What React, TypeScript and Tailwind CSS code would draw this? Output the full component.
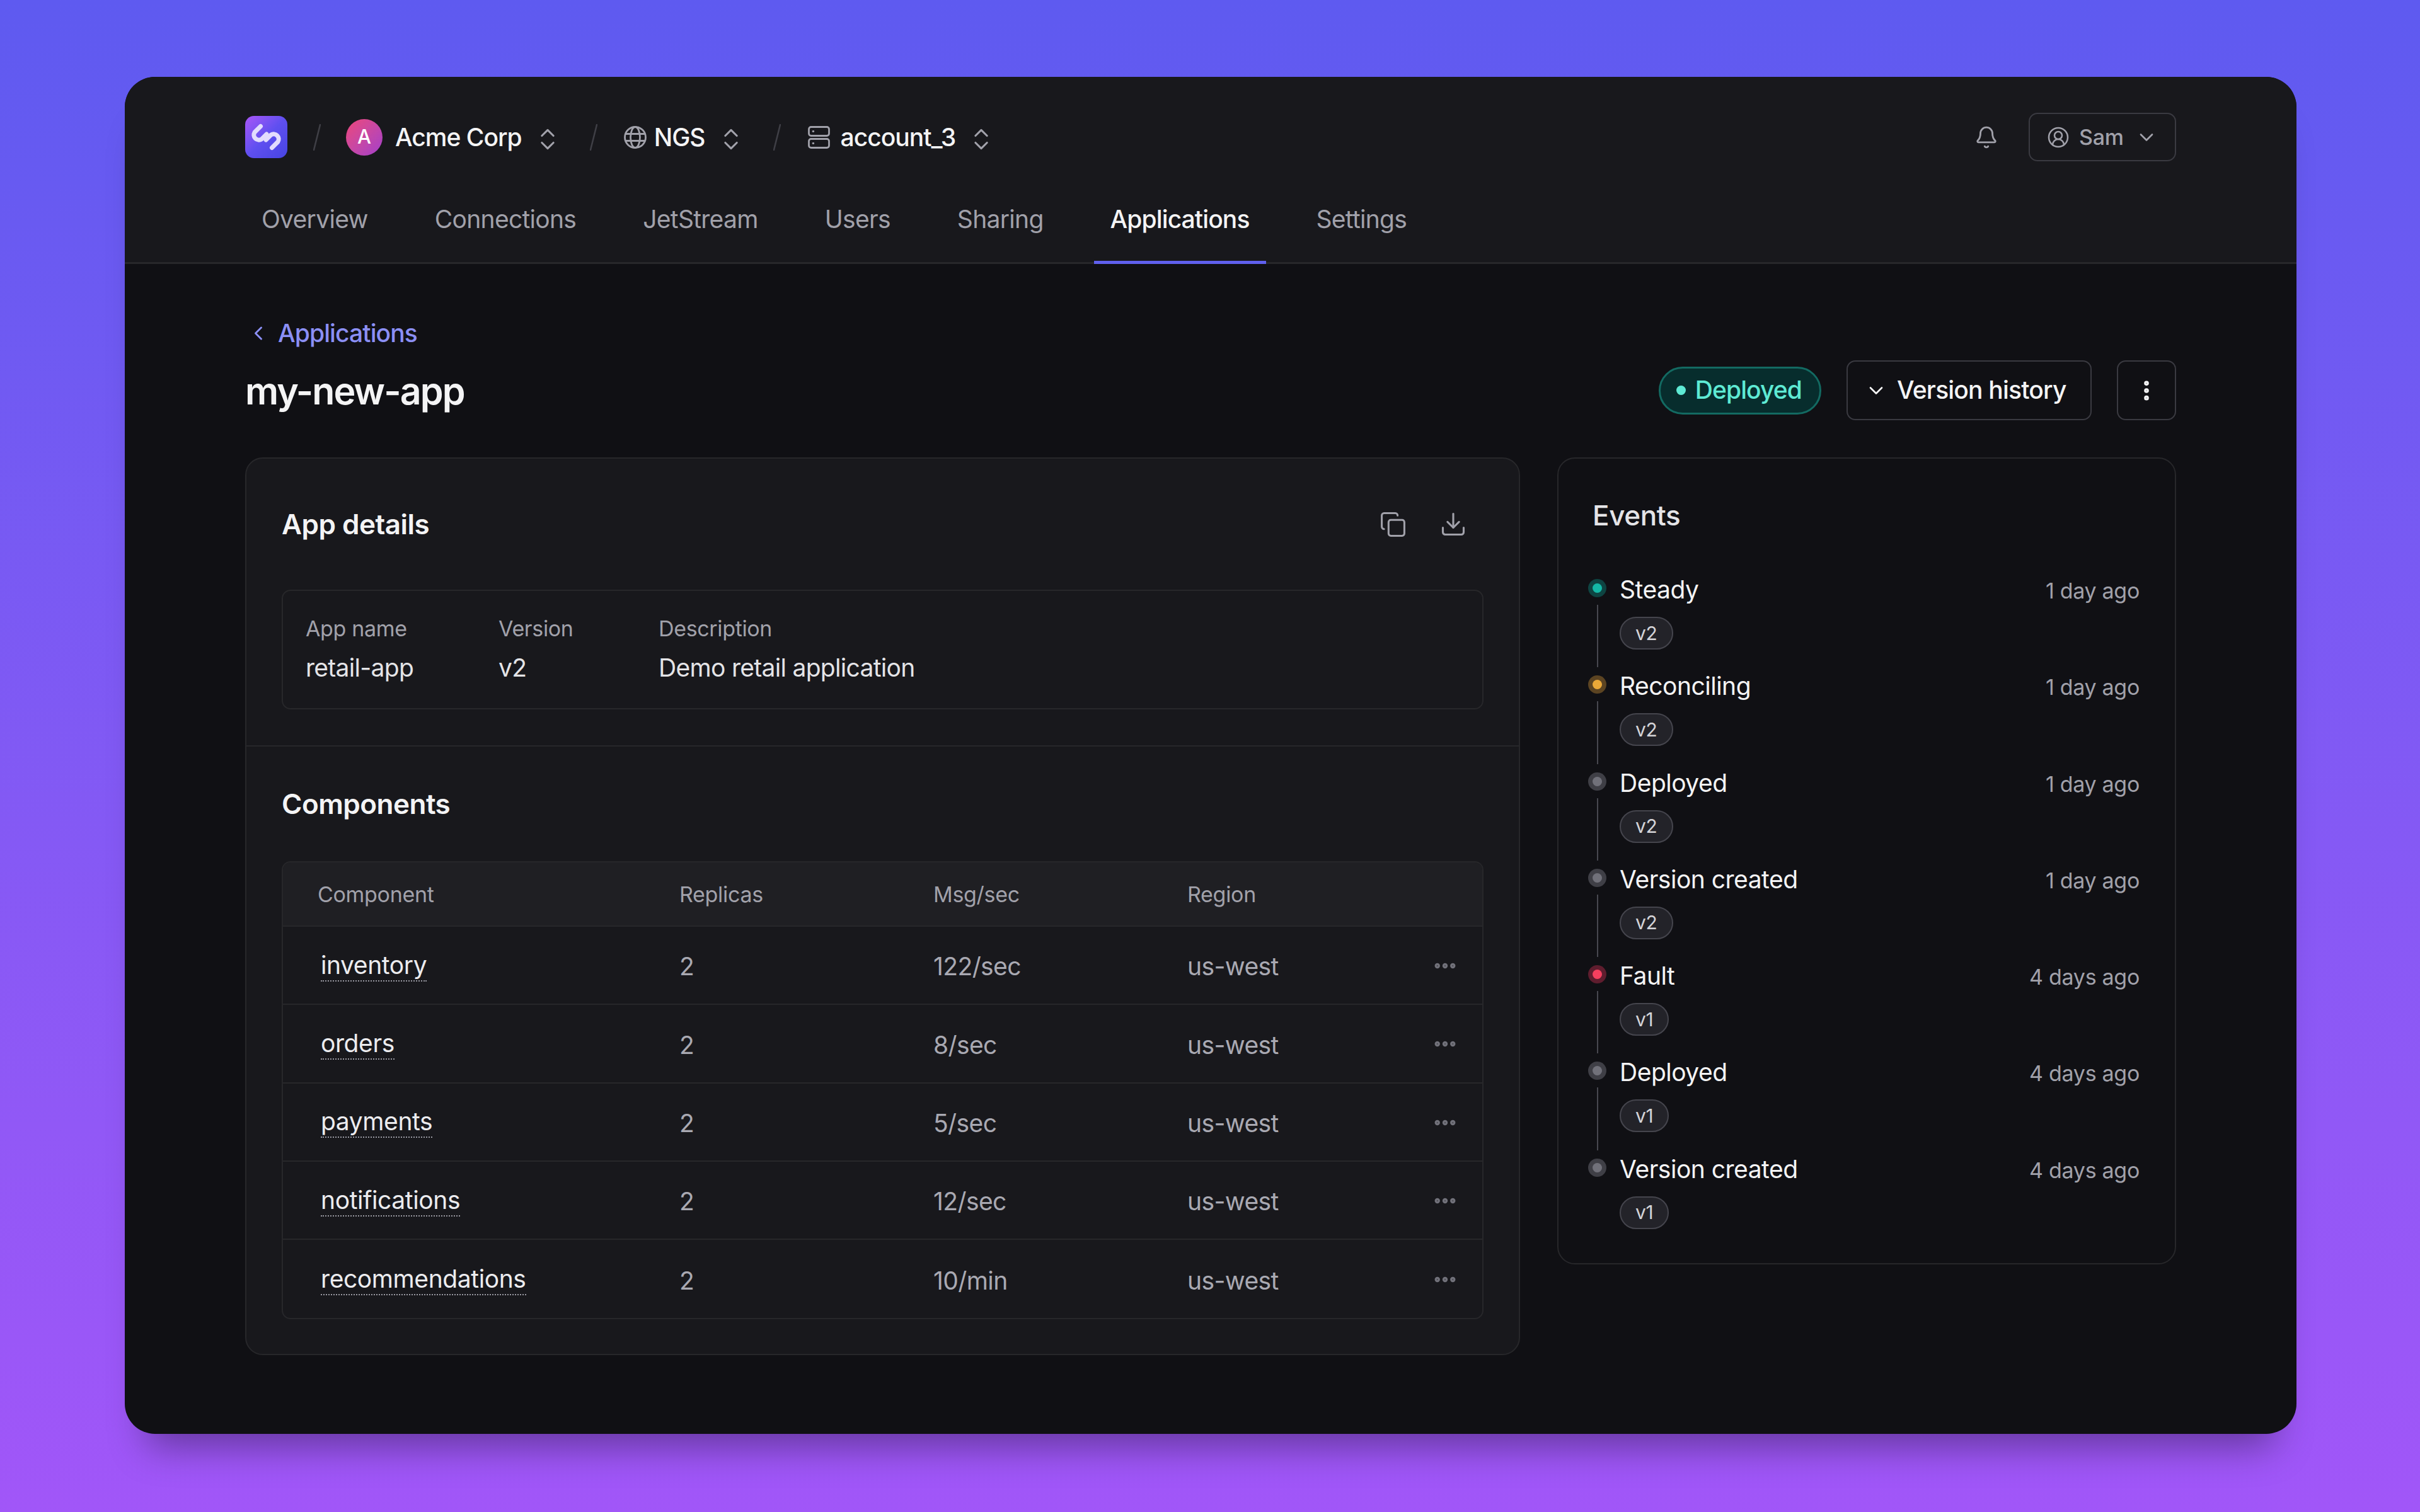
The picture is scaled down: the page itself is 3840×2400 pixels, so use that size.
import React from "react";
import { Bell, ChevronDown, ChevronLeft, ChevronsUpDown, CircleUserRound, Copy, Download, Ellipsis, EllipsisVertical } from "lucide-react";

const tabs = ["Overview", "Connections", "JetStream", "Users", "Sharing", "Applications", "Settings"];

const components = [
  { name: "inventory", rate: "122/sec" },
  { name: "orders", rate: "8/sec" },
  { name: "payments", rate: "5/sec" },
  { name: "notifications", rate: "12/sec" },
  { name: "recommendations", rate: "10/min" },
];

const dots = {
  teal: { outer: "bg-[#0e4442]", inner: "bg-[#14b8a6]" },
  amber: { outer: "bg-[#5c4422]", inner: "bg-[#eaa838]" },
  gray: { outer: "bg-[#3f3f46]", inner: "bg-[#71717a]" },
  red: { outer: "bg-[#5f1d2e]", inner: "bg-[#f43f5e]" },
};

const events: { name: string; version: string; time: string; dot: keyof typeof dots }[] = [
  { name: "Steady", version: "v2", time: "1 day ago", dot: "teal" },
  { name: "Reconciling", version: "v2", time: "1 day ago", dot: "amber" },
  { name: "Deployed", version: "v2", time: "1 day ago", dot: "gray" },
  { name: "Version created", version: "v2", time: "1 day ago", dot: "gray" },
  { name: "Fault", version: "v1", time: "4 days ago", dot: "red" },
  { name: "Deployed", version: "v1", time: "4 days ago", dot: "gray" },
  { name: "Version created", version: "v1", time: "4 days ago", dot: "gray" },
];

function Logo() {
  return (
    <div className="flex h-[67px] w-[67px] shrink-0 items-center justify-center rounded-[14px] bg-gradient-to-br from-[#a855f7] via-[#5f4ff0] to-[#4644e2]">
      <svg width="67" height="67" viewBox="0 0 67 67" fill="none" stroke="#e2dcfd" strokeWidth="7" strokeLinecap="round">
        <path d="M24.5 16.5L15 26A8 8 0 0 0 26 37L34 29" />
        <path d="M42.5 50.5L52 41A8 8 0 0 0 41 30L33 38" />
      </svg>
    </div>
  );
}

function Slash({ className }: { className: string }) {
  return (
    <svg width="12" height="42" viewBox="0 0 12 42" fill="none" stroke="#3f3f46" strokeWidth="2.5" strokeLinecap="round" className={className}>
      <path d="M11 1L1 41" />
    </svg>
  );
}

function UpDown() {
  return <ChevronsUpDown size={44} strokeWidth={1.7} className="ml-[19px] mt-[6px] shrink-0 text-[#a1a1aa]" />;
}

function GlobeIcon() {
  return (
    <svg width="36" height="36" viewBox="0 0 36 36" fill="none" stroke="#a1a1aa" strokeWidth="2.8" className="ml-[42px] shrink-0">
      <circle cx="18" cy="18" r="16.5" />
      <ellipse cx="18" cy="18" rx="7.5" ry="16.5" />
      <path d="M3 12.5H33M3 23.5H33" />
    </svg>
  );
}

function ServerIcon() {
  return (
    <svg width="35" height="36" viewBox="0 0 35 36" fill="none" stroke="#a1a1aa" strokeWidth="2.8" className="ml-[43px] shrink-0">
      <rect x="1.5" y="1.5" width="32" height="14" rx="3.5" />
      <rect x="1.5" y="20.5" width="32" height="14" rx="3.5" />
      <path d="M8 8.5H8.8M8 27.5H8.8" strokeLinecap="round" />
    </svg>
  );
}

function Header() {
  return (
    <header className="border-b-[3px] border-[#27272a] bg-[#18181c] px-[191px] pt-[57px]">
      <div className="flex h-[77px] items-center">
        <Logo />
        <Slash className="ml-[41px] shrink-0" />
        <div className="ml-[40px] flex h-[58px] w-[58px] shrink-0 items-center justify-center rounded-full bg-gradient-to-br from-[#ee4478] to-[#a43ccb] text-[31px] font-medium text-white">
          A
        </div>
        <span className="ml-[20px] pt-[2px] text-[39px] font-medium tracking-[-1px] text-[#f4f4f5]">Acme Corp</span>
        <UpDown />
        <Slash className="ml-[45px] shrink-0" />
        <GlobeIcon />
        <span className="ml-[12px] pt-[2px] text-[39px] font-medium tracking-[-1px] text-[#f4f4f5]">NGS</span>
        <UpDown />
        <Slash className="ml-[45px] shrink-0" />
        <ServerIcon />
        <span className="ml-[17px] pt-[2px] text-[39px] font-medium tracking-[-1px] text-[#f4f4f5]">account_3</span>
        <UpDown />
        <div className="ml-auto flex items-center">
          <Bell size={38} strokeWidth={1.8} className="text-[#a1a1aa]" />
          <div className="ml-[48px] flex h-[77px] w-[234px] items-center rounded-[14px] border-2 border-[#3a3a41] pl-[27px] text-[34px] font-medium tracking-[-0.3px] text-[#a1a1aa]">
            <CircleUserRound size={36} strokeWidth={1.7} />
            <span className="ml-[15px]">Sam</span>
            <ChevronDown size={36} strokeWidth={1.8} className="ml-[18px]" />
          </div>
        </div>
      </div>
      <nav className="-mb-[3px] mt-[47px] flex gap-[54px]">
        {tabs.map((tab) =>
          tab === "Applications" ? (
            <div key={tab} className="border-b-[5px] border-[#6060ee] px-[26px] pb-[36px] pt-[15px] text-[39px] font-medium leading-[60px] tracking-[-0.9px] text-[#f4f4f5]">
              {tab}
            </div>
          ) : (
            <div key={tab} className="border-b-[5px] border-transparent px-[26px] pb-[36px] pt-[15px] text-[39px] leading-[60px] tracking-[-0.7px] text-[#a1a1aa]">
              {tab}
            </div>
          )
        )}
      </nav>
    </header>
  );
}

function TitleRow() {
  return (
    <>
      <div className="flex h-[60px] items-center text-[39px] font-medium tracking-[-0.9px] text-[#8b8ff5]">
        <ChevronLeft size={36} strokeWidth={2} className="ml-[3px] text-[#8b8ff5]" />
        <span className="ml-[13px]">Applications</span>
      </div>
      <div className="mt-[13px] flex h-[95px] items-center">
        <h1 className="pt-[3px] text-[59px] font-semibold leading-[72px] tracking-[-1.9px] text-[#f4f4f5]">my-new-app</h1>
        <div className="ml-auto flex h-[76px] items-center rounded-full border-[3px] border-[#136a62] bg-[#072d2d] pl-[25px] pr-[28px] text-[39px] font-medium tracking-[-0.9px] text-[#5eead4]">
          <span className="h-[15px] w-[15px] rounded-full bg-[#5eead4]" />
          <span className="ml-[15px]">Deployed</span>
        </div>
        <div className="ml-[40px] flex h-[95px] w-[389px] items-center rounded-[14px] border-2 border-[#3a3a41] pl-[27px] text-[39px] font-medium tracking-[-0.8px] text-[#f4f4f5]">
          <ChevronDown size={36} strokeWidth={1.8} />
          <span className="ml-[15px]">Version history</span>
        </div>
        <div className="ml-[40px] flex h-[95px] w-[94px] items-center justify-center rounded-[14px] border-2 border-[#3a3a41] text-[#f4f4f5]">
          <EllipsisVertical size={40} strokeWidth={2.6} />
        </div>
      </div>
    </>
  );
}

function AppDetails() {
  return (
    <>
      <div className="flex h-[60px] items-center">
        <h2 className="text-[44px] font-semibold tracking-[-0.5px] text-[#f4f4f5]">App details</h2>
        <div className="ml-auto mr-[26px] flex items-center gap-[52px] text-[#a1a1aa]">
          <Copy size={43} strokeWidth={1.7} />
          <Download size={44} strokeWidth={1.7} />
        </div>
      </div>
      <div className="mt-[74px] flex h-[190px] rounded-[14px] border-2 border-[#27272a] pl-[36px] pt-[36px]">
        <div className="w-[306px]">
          <div className="text-[34px] leading-[48px] tracking-[-0.35px] text-[#a1a1aa]">App name</div>
          <div className="mt-[8px] text-[39px] leading-[60px] tracking-[-0.7px] text-[#e4e4e7]">retail-app</div>
        </div>
        <div className="w-[254px]">
          <div className="text-[34px] leading-[48px] tracking-[-0.35px] text-[#a1a1aa]">Version</div>
          <div className="mt-[8px] text-[39px] leading-[60px] tracking-[-0.7px] text-[#e4e4e7]">v2</div>
        </div>
        <div>
          <div className="text-[34px] leading-[48px] tracking-[-0.35px] text-[#a1a1aa]">Description</div>
          <div className="mt-[8px] text-[39px] leading-[60px] tracking-[-0.7px] text-[#e4e4e7]">Demo retail application</div>
        </div>
      </div>
    </>
  );
}

function ComponentsTable() {
  return (
    <div className="mt-[61px] overflow-hidden rounded-[14px] border-2 border-[#27272a]">
      <div className="grid h-[102px] grid-cols-[629px_403px_403px_1fr] items-center border-b-2 border-[#27272a] bg-[#1f1f23] text-[34px] tracking-[-0.3px] text-[#a1a1aa]">
        <div className="pl-[55px]">Component</div>
        <div>Replicas</div>
        <div>Msg/sec</div>
        <div>Region</div>
      </div>
      {components.map((row, i) => (
        <div
          key={row.name}
          className={
            i < components.length - 1
              ? "grid h-[124.3px] grid-cols-[629px_403px_403px_1fr] items-center border-b-2 border-[#27272a] text-[39px] tracking-[-0.6px] text-[#a9a9b2]"
              : "grid h-[124.3px] grid-cols-[629px_403px_403px_1fr] items-center text-[39px] tracking-[-0.6px] text-[#a9a9b2]"
          }
        >
          <div className="pl-[60px]">
            <span className="inline-block border-b-2 border-dotted border-[#9a9aa3] pb-[2px] leading-[44px] tracking-[-0.4px] text-[#ececef]">{row.name}</span>
          </div>
          <div className="pt-[5px]">2</div>
          <div className="pt-[5px]">{row.rate}</div>
          <div className="flex items-center justify-between pr-[38px] pt-[5px]">
            <span>us-west</span>
            <Ellipsis size={42} strokeWidth={2.8} className="-mt-[3px] text-[#71717a]" />
          </div>
        </div>
      ))}
    </div>
  );
}

function EventsCard() {
  return (
    <aside className="w-[982px] rounded-[28px] border-2 border-[#27272a] pb-[54px] pl-[54px] pr-[56px] pt-[60px]">
      <h2 className="text-[44px] font-medium leading-[60px] tracking-[-0.4px] text-[#e4e4e7]">Events</h2>
      <div className="-ml-[7px] mt-[58px]">
        {events.map((event, i) => (
          <div key={i} className={i < events.length - 1 ? "flex h-[153.3px]" : "flex"}>
            <div className="flex w-[29px] shrink-0 flex-col items-center pt-[13px]">
              <div className={`flex h-[29px] w-[29px] shrink-0 items-center justify-center rounded-full ${dots[event.dot].outer}`}>
                <div className={`h-[15px] w-[15px] rounded-full ${dots[event.dot].inner}`} />
              </div>
              {i < events.length - 1 && <div className="mt-[12px] w-[2px] flex-1 bg-[#47474f]" />}
            </div>
            <div className="ml-[21px] flex-1">
              <div className="flex items-start justify-between">
                <span className="text-[39px] leading-[60px] tracking-[-0.5px] text-[#f4f4f5]">{event.name}</span>
                <span className="pt-[2px] text-[34px] leading-[60px] tracking-[-0.3px] text-[#a1a1aa]">{event.time}</span>
              </div>
              <div className="mt-[11px] flex h-[52px] w-fit items-center rounded-full border-2 border-[#45454d] bg-[#232329] px-[23px] text-[30px] tracking-[-0.3px] text-[#d4d4d8]">
                {event.version}
              </div>
            </div>
          </div>
        ))}
      </div>
    </aside>
  );
}

export default function App() {
  return (
    <div className="h-[2400px] w-[3840px] overflow-hidden bg-gradient-to-b from-[#5e5af0] to-[#a156f8] pl-[198px] pt-[122px] font-['Inter',sans-serif]">
      <div className="w-[3446px] rounded-[48px] bg-[#101014] shadow-[0_55px_60px_-35px_rgba(0,0,0,0.36)]">
        <div className="overflow-hidden rounded-[48px]">
          <Header />
          <main className="px-[191px] pb-[125px] pt-[80px]">
            <TitleRow />
            <div className="mt-[59px] flex items-start justify-between">
              <section className="w-[2023px] rounded-[28px] border-2 border-[#27272a] bg-[#18181c]">
                <div className="px-[56px] pb-[57px] pt-[74px]">
                  <AppDetails />
                </div>
                <div className="border-t-2 border-[#27272a] px-[56px] pb-[55px] pt-[61px]">
                  <h2 className="text-[44px] font-semibold leading-[60px] tracking-[-0.5px] text-[#f4f4f5]">Components</h2>
                  <ComponentsTable />
                </div>
              </section>
              <EventsCard />
            </div>
          </main>
        </div>
      </div>
    </div>
  );
}
